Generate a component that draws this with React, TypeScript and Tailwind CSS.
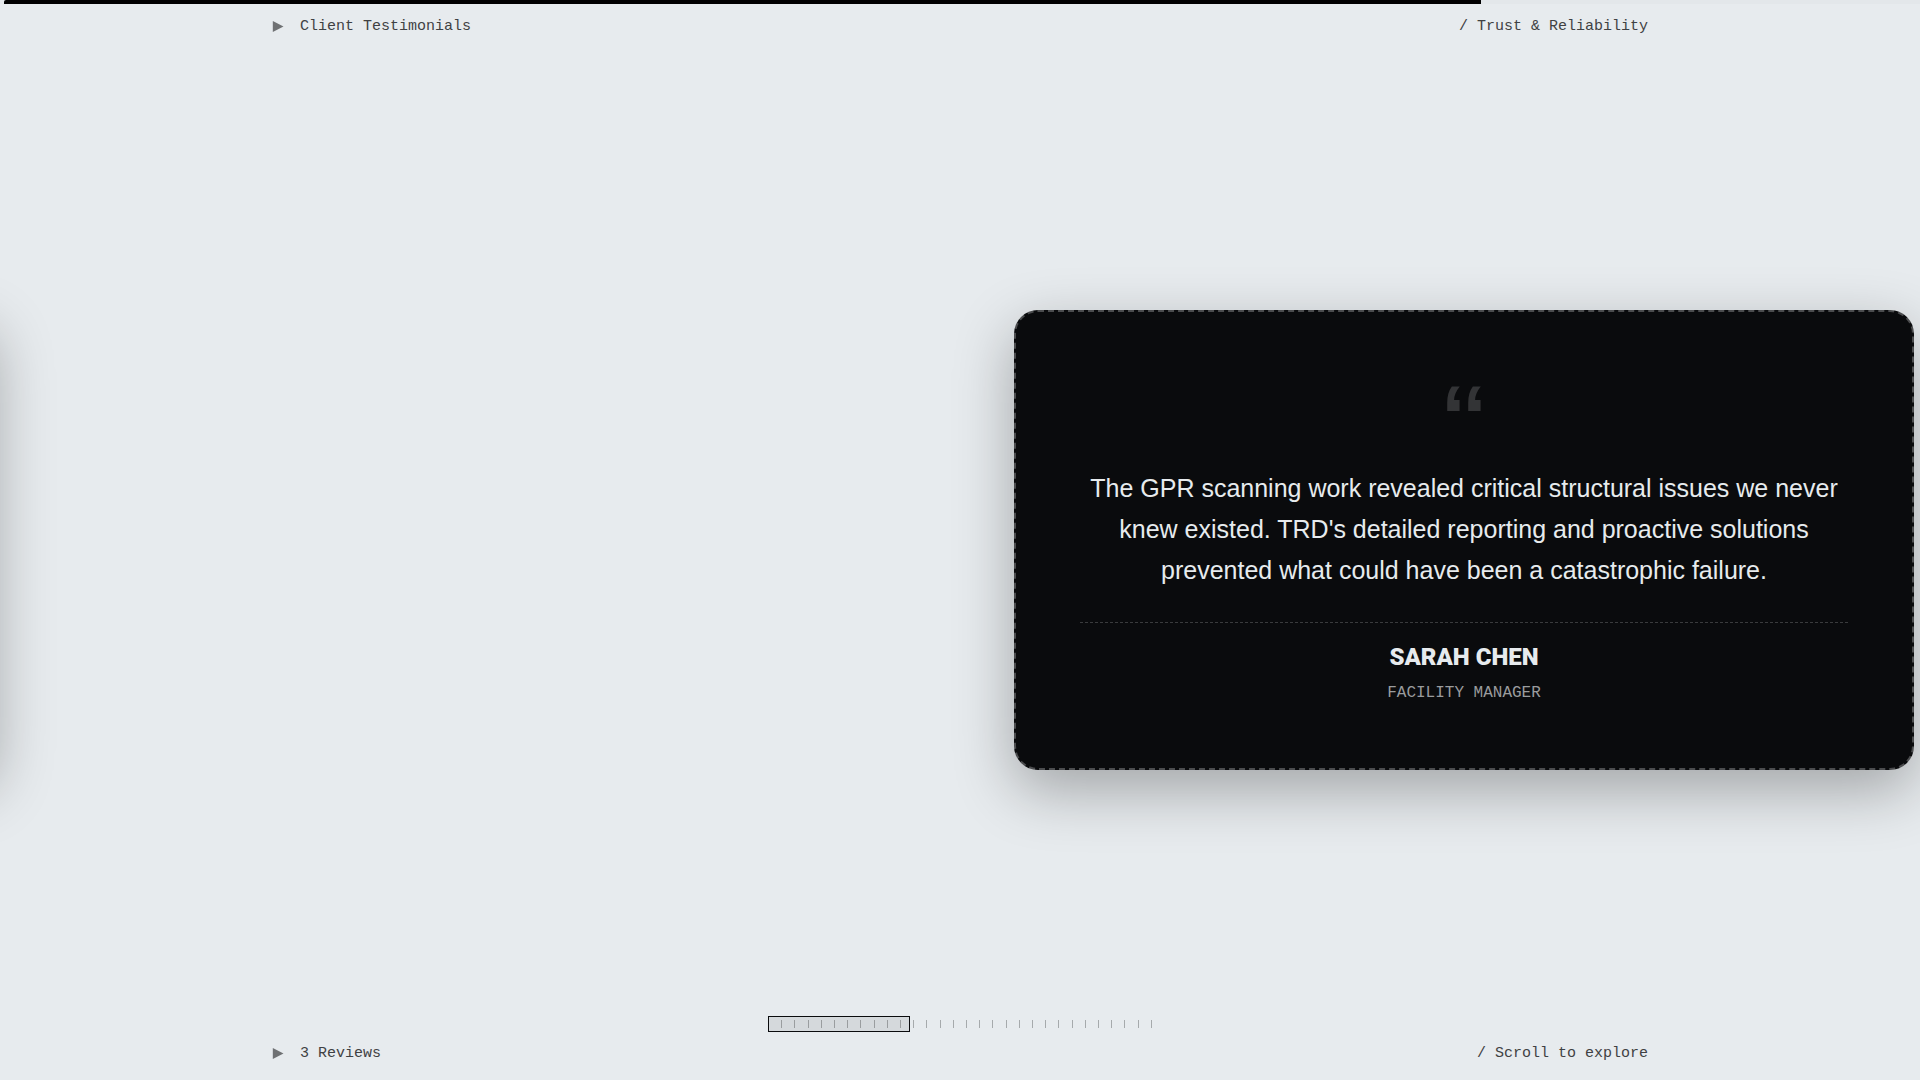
const progress = 0.369
const scrolled = 0.7708
const ticks = Array.from({ length: 30 }, (_, i) => i)

function Marker() {
  return (
    <svg viewBox="0 0 12 12" className="size-3 fill-[#6f7173]" aria-hidden="true">
      <path d="M0.8 0 L11.5 5.5 L0.8 11 Z" />
    </svg>
  )
}

function LabelRow({ left, right }: { left: string; right: string }) {
  return (
    <div className="mx-auto flex w-full max-w-[1440px] items-center justify-between px-8 font-['Liberation_Mono',monospace] text-[15px] leading-5 text-[#3f4143]">
      <span className="flex items-center gap-4">
        <Marker />
        {left}
      </span>
      <span>/ {right}</span>
    </div>
  )
}

function Card({ children }: { children?: React.ReactNode }) {
  return (
    <div className="flex w-screen shrink-0 items-center justify-center">
      <article className="flex min-h-[460px] w-[900px] flex-col items-center rounded-3xl border-2 border-dashed border-[#4b4c4e] bg-[#0a0b0d] p-16 text-center shadow-[0_20px_60px_rgba(0,0,0,0.3)]">
        {children}
      </article>
    </div>
  )
}

export default function App() {
  return (
    <section className="flex h-screen flex-col overflow-hidden bg-[#e7ebee]">
      <header className="pb-3.5">
        {/* Page progress */}
        <div className="h-1 w-full bg-[#e3e7ea] pl-1">
          <div className="h-full rounded-tl-xs bg-black" style={{ width: `${scrolled * 100}%` }} />
        </div>
        <div className="flex h-[46px] items-center">
          <LabelRow left="Client Testimonials" right="Trust & Reliability" />
        </div>
      </header>

      {/* Horizontal slider */}
      <div className="ml-[-73.75vw] flex flex-1">
        <Card />
        <Card>
          <div
            className="h-17 font-['Liberation_Sans',sans-serif] text-[88px] leading-20 font-bold text-[#333436]"
            aria-hidden="true"
          >
            ‘‘
          </div>
          <blockquote className="mt-6 w-full font-['Liberation_Sans',sans-serif] text-[25px] leading-[41px] text-[#e7ebee]">
            The GPR scanning work revealed critical structural issues we never knew existed. TRD's detailed reporting and
            proactive solutions prevented what could have been a catastrophic failure.
          </blockquote>
          <footer className="mt-[31px] w-full border-t border-dashed border-[#3a3b3d] pt-4">
            <div className="font-[Roboto,sans-serif] text-2xl leading-9 font-black text-[#e7ebee] uppercase">
              Sarah Chen
            </div>
            <div className="mt-2 font-['Liberation_Mono',monospace] text-base leading-5 text-[#9a9c9e] uppercase">
              Facility Manager
            </div>
          </footer>
        </Card>
      </div>

      <footer>
        {/* Minimap */}
        <div className="relative mx-auto flex h-4 w-1/5 items-center justify-between">
          <div
            className="absolute inset-y-0 left-0 border border-[#0a0b0d] bg-[#0a0b0d]/8"
            style={{ width: `${progress * 100}%` }}
          />
          {ticks.map((tick) => (
            <span key={tick} className="h-2 w-px bg-[#a6aaac]" />
          ))}
        </div>
        <div className="flex h-12 items-center pb-1">
          <LabelRow left="3 Reviews" right="Scroll to explore" />
        </div>
      </footer>
    </section>
  )
}
